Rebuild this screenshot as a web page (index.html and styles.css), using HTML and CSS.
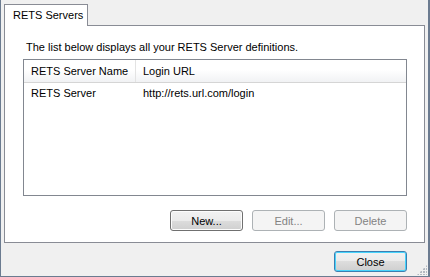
FILE: index.html
```html
<!DOCTYPE html>
<html lang="en">

<head>
    <meta charset="UTF-8">
    <title>RETS Servers</title>
    <link rel="stylesheet" href="styles.css">
</head>

<body>
    <div class="window">
        <div class="tabs">
            <div class="tab">RETS Servers</div>
        </div>
        <div class="panel">
            <p class="intro">The list below displays all your RETS Server definitions.</p>
            <div class="list">
                <div class="list-head">
                    <div class="col name">RETS Server Name</div>
                    <div class="col url">Login URL</div>
                </div>
                <div class="list-row">
                    <div class="col name">RETS Server</div>
                    <div class="col url">http://rets.url.com/login</div>
                </div>
            </div>
            <div class="actions">
                <button class="btn">New...</button>
                <button class="btn" disabled>Edit...</button>
                <button class="btn" disabled>Delete</button>
            </div>
        </div>
        <div class="footer">
            <button class="btn focus">Close</button>
        </div>
        <div class="grip"></div>
    </div>
</body>

</html>
```

FILE: styles.css
```css
* {
    padding: 0;
    margin: 0;
    box-sizing: border-box;
}

body {
    font-family: "Liberation Sans", Arial, sans-serif;
    font-size: 11px;
    color: #000;
}

.window {
    position: relative;
    width: 430px;
    height: 277px;
    background-color: #f0f0f0;
    border-left: 1px solid #6b7b90;
    border-right: 2px solid #6b7b90;
    border-bottom: 1px solid #6b7b90;
    padding: 4px 3px 0 3px;
    display: flex;
    flex-direction: column;
}

.tabs {
    display: flex;
    height: 21px;
}

.tab {
    width: 84px;
    height: 22px;
    padding: 4px 0 0 8px;
    white-space: nowrap;
    background-color: #fff;
    border: 1px solid #898c95;
    border-bottom: none;
    position: relative;
    z-index: 1;
}

.panel {
    height: 218px;
    background-color: #fff;
    border: 1px solid #898c95;
    padding: 14px 17px 0 18px;
    display: flex;
    flex-direction: column;
}

.intro {
    line-height: 14px;
    margin-left: 3px;
    margin-bottom: 5px;
}

.list {
    height: 137px;
    border: 1px solid #828790;
}

.list-head {
    display: flex;
    height: 23px;
    background: linear-gradient(#fff, #fff 45%, #f1f2f4);
    border-bottom: 1px solid #d5d5d5;
}

.list-head .col {
    line-height: 22px;
}

.list-head .name {
    border-right: 1px solid #e3e3e3;
}

.list-row {
    display: flex;
    height: 21px;
}

.list-row .col {
    line-height: 20px;
}

.col {
    padding-left: 7px;
    white-space: nowrap;
}

.col.name {
    width: 112px;
}

.actions {
    display: flex;
    justify-content: flex-end;
    gap: 9px;
    margin-top: 14px;
}

.btn {
    width: 73px;
    height: 21px;
    font-family: inherit;
    font-size: 11px;
    color: #000;
    border: 1px solid #707070;
    border-radius: 3px;
    background: linear-gradient(#f2f2f2, #ebebeb 50%, #dddddd 50%, #cfcfcf);
    box-shadow: inset 0 0 0 1px #fcfcfc;
}

.btn[disabled] {
    color: #838383;
    border-color: #adb2b5;
    background: #f4f4f4;
    box-shadow: none;
}

.btn.focus {
    border-color: #3c7fb1;
    box-shadow: inset 0 0 0 1px #48d4fc;
}

.footer {
    display: flex;
    justify-content: flex-end;
    padding: 8px 18px 0 0;
}

.grip {
    position: absolute;
    right: 1px;
    bottom: 1px;
    width: 10px;
    height: 10px;
    background:
        radial-gradient(circle at 1px 1px, #b3b9c1 1px, transparent 1.2px) 0 0 / 3px 3px;
    clip-path: polygon(100% 0, 100% 100%, 0 100%);
}
```
